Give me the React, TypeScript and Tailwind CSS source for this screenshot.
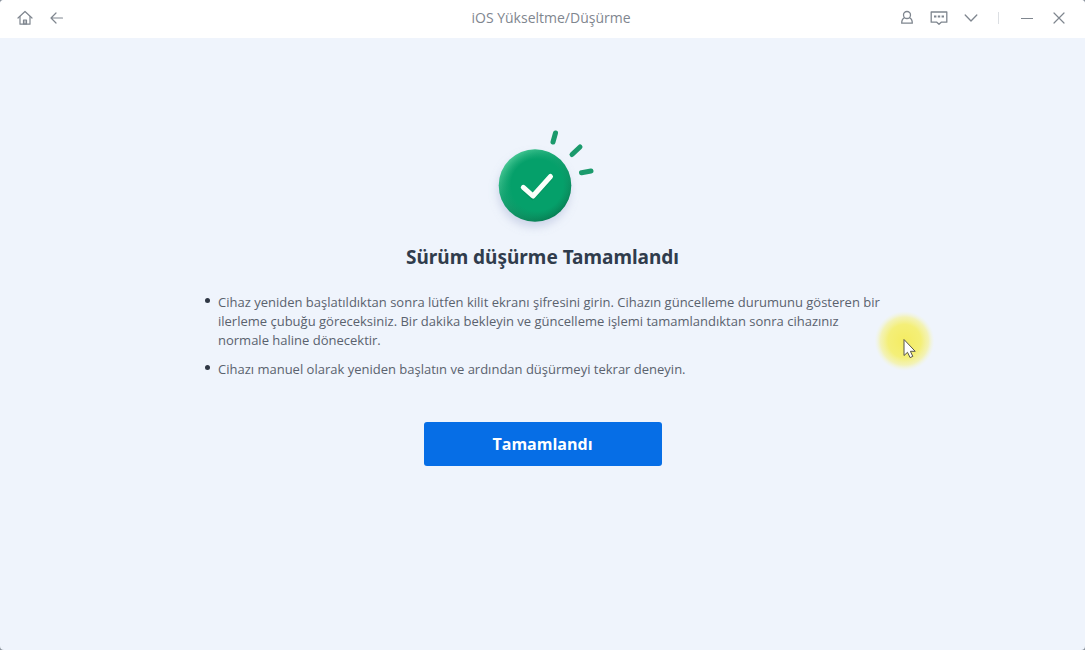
import React from "react";

const iconButton = "flex h-6 items-center justify-center text-[#7f868f]";

function HomeIcon() {
  return (
    <svg width="16" height="16" viewBox="0 0 16 16" fill="none" stroke="currentColor" strokeWidth="1.2" strokeLinejoin="round" strokeLinecap="round">
      <path d="M1 8 8 1.5 15 8" />
      <path d="M3 6.5v7.7h10V6.5" />
      <path d="M6.5 14v-4h3v4z" fill="currentColor" fillOpacity="0.5" />
    </svg>
  );
}

function BackIcon() {
  return (
    <svg width="14" height="12" viewBox="0 0 14 12" fill="none" stroke="currentColor" strokeWidth="1.2" strokeLinecap="round" strokeLinejoin="round">
      <path d="M12.500 6H1M6 1 1 6l5 5" />
    </svg>
  );
}

function UserIcon() {
  return (
    <svg width="14" height="16" viewBox="0 0 14 16" fill="none" stroke="currentColor" strokeWidth="1.300" strokeLinejoin="round">
      <circle cx="7" cy="5" r="3.500" />
      <path d="M4.600 7.700C2.600 8.500 1.700 10.500 1.700 13.200h10.600c0-2.700-.9-4.700-2.900-5.500" />
    </svg>
  );
}

function MessageIcon() {
  return (
    <svg width="18" height="16" viewBox="0 0 18 16" fill="none" stroke="currentColor" strokeWidth="1.300" strokeLinejoin="round">
      <path d="M1.200 2h15.600v10.200h-5.600L9 14.300 6.800 12.200H1.200z" />
      <path d="M4 6.500h2.400M7.800 6.500h2.400M11.600 6.500h2.400" strokeWidth="2" />
    </svg>
  );
}

function ChevronIcon() {
  return (
    <svg width="14" height="8" viewBox="0 0 14 8" fill="none" stroke="currentColor" strokeWidth="1.3" strokeLinecap="round" strokeLinejoin="round">
      <path d="m1.200 1 5.800 6 5.800-6" />
    </svg>
  );
}

function MinimizeIcon() {
  return (
    <svg width="12" height="12" viewBox="0 0 12 12" stroke="currentColor" strokeWidth="1.2">
      <path d="M0 6.500h12" />
    </svg>
  );
}

function CloseIcon() {
  return (
    <svg width="12" height="12" viewBox="0 0 12 12" stroke="currentColor" strokeWidth="1.2" strokeLinecap="round">
      <path d="m1 1 10 10M11 1 1 11" />
    </svg>
  );
}

function SuccessBadge() {
  return (
    <svg width="118" height="116" viewBox="0 0 118 116" fill="none" role="img" aria-label="Tamamlandı">
      <defs>
        <linearGradient id="rim" x1="20" y1="28" x2="72" y2="98" gradientUnits="userSpaceOnUse">
          <stop offset="0" stopColor="#5bd6a2" />
          <stop offset="0.45" stopColor="#18a573" />
          <stop offset="1" stopColor="#06794f" />
        </linearGradient>
        <radialGradient id="face" cx="53" cy="65" r="37" gradientUnits="userSpaceOnUse">
          <stop offset="0" stopColor="#05a06a" />
          <stop offset="0.7" stopColor="#05a06a" />
          <stop offset="1" stopColor="#05a06a" stopOpacity="0" />
        </radialGradient>
        <filter id="soft" x="-40%" y="-40%" width="180%" height="180%">
          <feGaussianBlur stdDeviation="5" />
        </filter>
      </defs>
      <circle cx="50" cy="71" r="36" fill="#8a96c0" fillOpacity="0.35" filter="url(#soft)" />
      <circle cx="51" cy="65.500" r="36.300" fill="url(#rim)" />
      <circle cx="51" cy="65.500" r="36" fill="url(#face)" />
      <path d="m40 69 8.500 8.500L66 58.500" stroke="#0a7a51" strokeOpacity="0.35" strokeWidth="5" strokeLinecap="round" strokeLinejoin="round" />
      <path d="m39.300 67.300 9.700 8.700L66.500 56.500" stroke="#fbfffa" strokeWidth="5" strokeLinecap="round" strokeLinejoin="round" />
      <g stroke="#1b9a6c" strokeWidth="5" strokeLinecap="round">
        <path d="M71.500 13 69 22" />
        <path d="m96 27-8 7.500" />
        <path d="m107 51-9.500 1.700" />
      </g>
    </svg>
  );
}

function Pointer() {
  return (
    <div aria-hidden="true" className="pointer-events-none absolute top-[309px] left-[873px] size-16">
      <svg width="64" height="64" viewBox="0 0 64 64">
        <defs>
          <radialGradient id="glow">
            <stop offset="0" stopColor="#f4ec62" />
            <stop offset="0.55" stopColor="#f4ef78" />
            <stop offset="0.8" stopColor="#f4f2a4" stopOpacity="0.8" />
            <stop offset="1" stopColor="#f2f5d8" stopOpacity="0" />
          </radialGradient>
        </defs>
        <circle cx="31.500" cy="32" r="30" fill="url(#glow)" />
        <path d="M31 30.500v16l3.500-3.200 2.600 5.300 2.700-1.200-2.400-5.100h4.800z" fill="#fff" stroke="#55544a" strokeWidth="1" strokeLinejoin="round" />
      </svg>
    </div>
  );
}

const notes = [
  "Cihaz yeniden başlatıldıktan sonra lütfen kilit ekranı şifresini girin. Cihazın güncelleme durumunu gösteren bir ilerleme çubuğu göreceksiniz. Bir dakika bekleyin ve güncelleme işlemi tamamlandıktan sonra cihazınız normale haline dönecektir.",
  "Cihazı manuel olarak yeniden başlatın ve ardından düşürmeyi tekrar deneyin.",
];

export default function App() {
  return (
    <div className="min-h-screen bg-[#8b929c] font-['Open_Sans','Noto_Sans',sans-serif]">
      <div className="relative flex min-h-screen flex-col overflow-hidden rounded-sm bg-[#eff4fc]">
        <header className="grid h-[38px] grid-cols-[1fr_auto_1fr] items-center bg-white pr-[14px] pb-0.5 pl-[15px]">
          <nav className="flex items-center gap-3">
            <button type="button" aria-label="Ana sayfa" className={`${iconButton} w-5`}><HomeIcon /></button>
            <button type="button" aria-label="Geri" className={`${iconButton} w-5`}><BackIcon /></button>
          </nav>
          <h1 className="pl-4 text-sm text-[#7f868f]">iOS Yükseltme/Düşürme</h1>
          <div className="flex items-center justify-end gap-2">
            <button type="button" aria-label="Hesap" className={`${iconButton} w-6`}><UserIcon /></button>
            <button type="button" aria-label="Mesajlar" className={`${iconButton} w-6`}><MessageIcon /></button>
            <button type="button" aria-label="Menü" className={`${iconButton} w-6`}><ChevronIcon /></button>
            <span className="mr-2 ml-[7px] h-3 w-px bg-[#dcdfe3]" />
            <button type="button" aria-label="Küçült" className={`${iconButton} w-6`}><MinimizeIcon /></button>
            <button type="button" aria-label="Kapat" className={`${iconButton} w-6`}><CloseIcon /></button>
          </div>
        </header>

        <main className="flex flex-col items-center px-6 pt-[82px]">
          <SuccessBadge />
          <h2 className="mt-2 font-['Noto_Sans',sans-serif] text-[19px] leading-[26px] font-bold text-[#303c4c]">Sürüm düşürme Tamamlandı</h2>
          <ul className="mt-[23px] flex w-full max-w-[691px] flex-col gap-2.5 pl-2 text-[13px] leading-[19px] text-[#5a626e]">
            {notes.map((note) => (
              <li key={note} className="flex gap-2">
                <span className="mt-[5px] size-[5px] shrink-0 rounded-full bg-[#2f3744]" />
                <span>{note}</span>
              </li>
            ))}
          </ul>
          <button type="button" className="mt-[43px] h-11 w-[238px] rounded-[3px] bg-[#066ee6] text-base font-bold text-white">
            Tamamlandı
          </button>
        </main>

        <Pointer />
      </div>
    </div>
  );
}
